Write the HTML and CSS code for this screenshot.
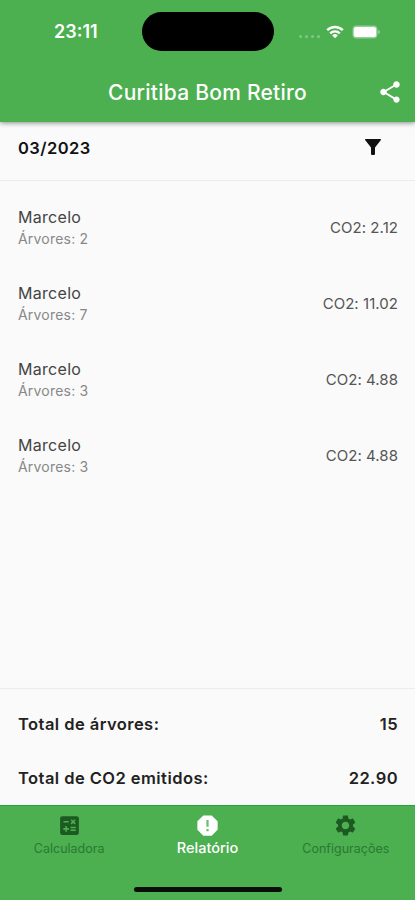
FILE: index.html
```html
<!DOCTYPE html>
<html lang="pt-BR">
<head>
<meta charset="UTF-8" />
<meta name="viewport" content="width=device-width, initial-scale=1" />
<title>Curitiba Bom Retiro</title>
<link rel="stylesheet" href="styles.css">
</head>
<body>
<div class="app">
  <header>
    <div class="status">
      <span class="time">23:11</span>
      <div class="island"></div>
      <div class="signal"><i></i><i></i><i></i><i></i></div>
      <svg class="wifi" width="18" height="14" viewBox="0 0 18 14" fill="none" stroke="#fff" stroke-width="2.4">
        <path d="M1.2 5.1a11.2 11.2 0 0 1 15.6 0M4.2 8.3a7 7 0 0 1 9.6 0" />
        <path d="M9 13.2L6.2 10.4a4 4 0 0 1 5.6 0z" fill="#fff" stroke="none" />
      </svg>
      <svg class="battery" width="28" height="14" viewBox="0 0 28 14">
        <rect x=".5" y=".5" width="25" height="13" rx="4" fill="#fff" fill-opacity=".4" />
        <rect x="1.8" y="2" width="22.4" height="10" rx="2.5" fill="#fff" />
        <path d="M26.4 5v4q1.5-.6 1.5-2t-1.5-2z" fill="#fff" fill-opacity=".5" />
      </svg>
    </div>
    <div class="titlebar">
      <h1>Curitiba Bom Retiro</h1>
      <svg class="share" width="26" height="26" viewBox="0 0 24 24" fill="#fff">
        <path d="M18 16.08c-.76 0-1.44.3-1.96.77L8.91 12.7c.05-.23.09-.46.09-.7s-.04-.47-.09-.7l7.05-4.11c.54.5 1.25.81 2.04.81 1.66 0 3-1.34 3-3s-1.34-3-3-3-3 1.34-3 3c0 .24.04.47.09.7L8.04 9.81C7.5 9.31 6.79 9 6 9c-1.66 0-3 1.34-3 3s1.34 3 3 3c.79 0 1.5-.31 2.04-.81l7.12 4.16c-.05.21-.08.43-.08.65 0 1.61 1.31 2.92 2.92 2.92s2.92-1.31 2.92-2.92-1.31-2.92-2.92-2.92z" />
      </svg>
    </div>
  </header>

  <div class="filter">
    <strong>03/2023</strong>
    <svg width="16" height="16" viewBox="0 0 16 16" fill="#111">
      <path d="M.5 0h15q.8.5.2 1.3L10 8.5V15q0 1-1 1H7q-1 0-1-1V8.5L.3 1.3Q-.3.5.5 0z" />
    </svg>
  </div>

  <ul class="lista">
    <li>
      <div><p class="nome">Marcelo</p><p class="arvores">Árvores: 2</p></div>
      <span class="co2">CO2: 2.12</span>
    </li>
    <li>
      <div><p class="nome">Marcelo</p><p class="arvores">Árvores: 7</p></div>
      <span class="co2">CO2: 11.02</span>
    </li>
    <li>
      <div><p class="nome">Marcelo</p><p class="arvores">Árvores: 3</p></div>
      <span class="co2">CO2: 4.88</span>
    </li>
    <li>
      <div><p class="nome">Marcelo</p><p class="arvores">Árvores: 3</p></div>
      <span class="co2">CO2: 4.88</span>
    </li>
  </ul>

  <div class="totais">
    <div class="total"><span>Total de árvores:</span><span>15</span></div>
    <div class="total"><span>Total de CO2 emitidos:</span><span>22.90</span></div>
  </div>

  <nav>
    <div class="tabs">
      <div class="tab">
        <svg width="25" height="25" viewBox="0 0 24 24">
          <path d="M19 3H5c-1.1 0-2 .9-2 2v14c0 1.1.9 2 2 2h14c1.1 0 2-.9 2-2V5c0-1.1-.9-2-2-2zm-5.97 4.06L14.09 6l1.41 1.41L16.91 6l1.06 1.06-1.41 1.41 1.41 1.41-1.06 1.06-1.41-1.4-1.41 1.41-1.06-1.06 1.41-1.41-1.41-1.42zm-6.78.66h5v1.5h-5v-1.5zM11.5 16h-2v2H8v-2H6v-1.5h2v-2h1.5v2h2V16zm6.5 1.25h-5v-1.5h5v1.5zm0-2.5h-5v-1.5h5v1.5z" />
        </svg>
        <span>Calculadora</span>
      </div>
      <div class="tab ativo">
        <svg width="27" height="27" viewBox="0 0 24 24">
          <path d="M15.73 3H8.27L3 8.27v7.46L8.27 21h7.46L21 15.73V8.27L15.73 3z" />
          <path class="marca" d="M11 7h2v6h-2zM11 15h2v2h-2z" />
        </svg>
        <span>Relatório</span>
      </div>
      <div class="tab">
        <svg width="25" height="25" viewBox="0 0 24 24">
          <path d="M19.14 12.94c.04-.3.06-.61.06-.94 0-.32-.02-.64-.07-.94l2.03-1.58c.18-.14.23-.41.12-.61l-1.92-3.32c-.12-.22-.37-.29-.59-.22l-2.39.96c-.5-.38-1.03-.7-1.62-.94l-.36-2.54c-.04-.24-.24-.41-.48-.41h-3.84c-.24 0-.43.17-.47.41l-.36 2.54c-.59.24-1.13.57-1.62.94l-2.39-.96c-.22-.08-.47 0-.59.22L2.74 8.87c-.12.21-.08.47.12.61l2.03 1.58c-.05.3-.09.63-.09.94s.02.64.07.94l-2.03 1.58c-.18.14-.23.41-.12.61l1.92 3.32c.12.22.37.29.59.22l2.39-.96c.5.38 1.03.7 1.62.94l.36 2.54c.05.24.24.41.48.41h3.84c.24 0 .44-.17.47-.41l.36-2.54c.59-.24 1.13-.56 1.62-.94l2.39.96c.22.08.47 0 .59-.22l1.92-3.32c.12-.22.07-.47-.12-.61l-2.01-1.58zM12 15.6c-1.98 0-3.6-1.62-3.6-3.6s1.62-3.6 3.6-3.6 3.6 1.62 3.6 3.6-1.62 3.6-3.6 3.6z" />
        </svg>
        <span>Configurações</span>
      </div>
    </div>
    <div class="home"></div>
  </nav>
</div>
</body>
</html>
```
FILE: styles.css
```css
* {
  box-sizing: border-box;
}
body {
  margin: 0;
  font-family: Inter, Roboto, sans-serif;
  background: #fafafa;
}
h1, p, ul {
  margin: 0;
  padding: 0;
}
svg {
  display: block;
}
.app {
  height: 900px;
  display: flex;
  flex-direction: column;
  overflow: hidden;
}
header {
  height: 122px;
  flex: none;
  background: #4caf50;
  color: #fff;
  box-shadow: 0 1px 5px rgba(0,0,0,0.45);
}
.status {
  height: 63px;
  display: flex;
  align-items: center;
  padding-left: 54px;
}
.time {
  width: 88px;
  font-size: 18px;
  font-weight: 600;
}
.island {
  width: 132px;
  height: 39px;
  border-radius: 20px;
  background: #000;
}
.signal {
  display: flex;
  gap: 3px;
  margin: 9px 6px 0 25px;
}
.signal i {
  width: 3px;
  height: 3px;
  border-radius: 50%;
  background: rgba(255,255,255,0.3);
}
.battery {
  margin-left: 8px;
}
.titlebar {
  height: 59px;
  display: grid;
  grid-template-columns: 50px 1fr 50px;
  align-items: center;
}
h1 {
  grid-column: 2;
  text-align: center;
  font-size: 21px;
  font-weight: 500;
  letter-spacing: 0.25px;
}
.share {
  justify-self: center;
  margin-bottom: 2px;
}
.filter {
  height: 59px;
  flex: none;
  display: flex;
  justify-content: space-between;
  padding: 17px 34px 0 18px;
  border-bottom: 1px solid #ececec;
  font-size: 16.5px;
  line-height: 18px;
  letter-spacing: 0.45px;
  color: #111;
}
.filter strong {
  font-weight: 600;
}
.lista {
  flex: 1;
  list-style: none;
  padding-top: 8px;
}
.lista li {
  height: 76px;
  display: flex;
  align-items: center;
  justify-content: space-between;
  padding: 0 17px 0 18px;
}
.nome {
  font-size: 16px;
  line-height: 22px;
  letter-spacing: 0.3px;
  color: #444;
}
.arvores {
  font-size: 14px;
  line-height: 21px;
  letter-spacing: 0.2px;
  color: #888;
}
.co2 {
  font-size: 15px;
  letter-spacing: 0.05px;
  color: #555;
}
.totais {
  height: 117px;
  flex: none;
  padding-top: 8px;
  border-top: 1px solid #ececec;
}
.total {
  height: 54px;
  display: flex;
  align-items: center;
  justify-content: space-between;
  padding: 0 17px 0 18px;
  font-size: 16.5px;
  font-weight: 600;
  letter-spacing: 0.45px;
  color: #222;
}
nav {
  height: 95px;
  flex: none;
  background: #4caf50;
  border-top: 1px solid #2ba235;
}
.tabs {
  height: 81px;
  display: grid;
  grid-template-columns: repeat(3, 1fr);
}
.tab {
  display: flex;
  flex-direction: column;
  align-items: center;
  padding-top: 7px;
  font-size: 12.5px;
  color: #2b7a31;
}
.tab svg {
  fill: #1c5a22;
}
.tab span {
  line-height: 18px;
  margin-top: 2px;
}
.ativo {
  padding-top: 6px;
  font-size: 14.5px;
  font-weight: 500;
  color: #fff;
}
.ativo svg {
  fill: #fff;
}
.ativo span {
  margin-top: 0;
}
.ativo .marca {
  fill: #6cbd6f;
}
.home {
  width: 148px;
  height: 5px;
  margin: 0 auto;
  border-radius: 3px;
  background: #0b0f0b;
}
```
